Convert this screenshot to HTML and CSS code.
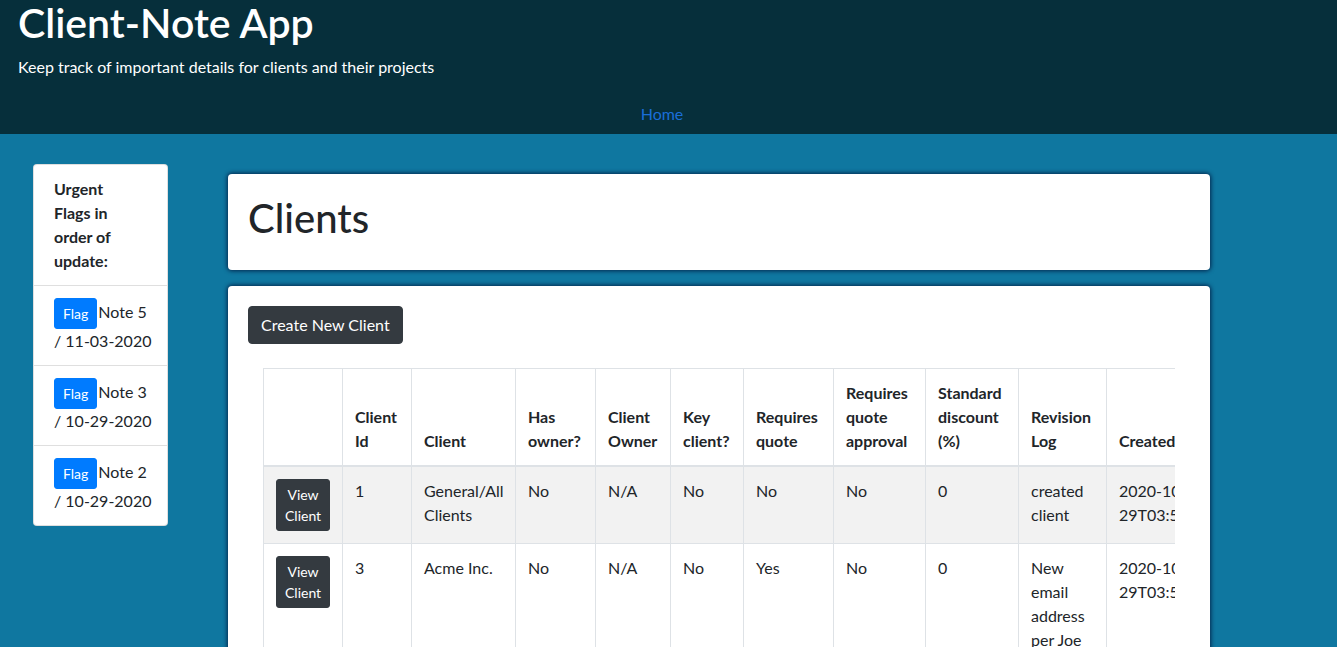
FILE: index.html
```html
<!DOCTYPE html>
<html lang="en">
<head>
<meta charset="utf-8">
<title>Client-Note App</title>
<link rel="stylesheet" href="styles.css">
</head>
<body>
<header class="site-header">
  <h1 class="brand">Client-Note App</h1>
  <p class="tagline">Keep track of important details for clients and their projects</p>
  <nav class="site-nav"><a class="nav-link" href="#">Home</a></nav>
</header>
<div class="page">
  <aside class="flags-card">
    <div class="flags-header">Urgent Flags in order of update:</div>
    <ul class="flag-list">
      <li class="flag-item"><span class="btn-flag">Flag</span>Note 5 <span class="flag-date">/ 11-03-2020</span></li>
      <li class="flag-item"><span class="btn-flag">Flag</span>Note 3 <span class="flag-date">/ 10-29-2020</span></li>
      <li class="flag-item"><span class="btn-flag">Flag</span>Note 2 <span class="flag-date">/ 10-29-2020</span></li>
    </ul>
  </aside>
  <main class="main">
    <section class="card title-card">
      <h2 class="page-title">Clients</h2>
    </section>
    <section class="card list-card">
      <a class="btn-create" href="#">Create New Client</a>
      <div class="table-wrap">
        <table class="clients-table">
          <colgroup>
            <col class="c-act"><col class="c-id"><col class="c-client"><col class="c-owner"><col class="c-cowner"><col class="c-key"><col class="c-quote"><col class="c-qapp"><col class="c-disc"><col class="c-log"><col class="c-date"><col class="c-date"><col class="c-act2">
          </colgroup>
          <thead>
            <tr>
              <th></th>
              <th>Client Id</th>
              <th>Client</th>
              <th>Has owner?</th>
              <th>Client Owner</th>
              <th>Key client?</th>
              <th>Requires quote</th>
              <th>Requires quote approval</th>
              <th>Standard discount (%)</th>
              <th>Revision Log</th>
              <th>Created</th>
              <th>Updated</th>
              <th></th>
            </tr>
          </thead>
          <tbody>
            <tr class="striped">
              <td><a class="btn-view" href="#">View Client</a></td>
              <td>1</td>
              <td>General/All Clients</td>
              <td>No</td>
              <td>N/A</td>
              <td>No</td>
              <td>No</td>
              <td>No</td>
              <td>0</td>
              <td>created client</td>
              <td>2020-10-<br>29T03:54:21.933Z</td>
              <td>2020-10-<br>29T03:54:21.933Z</td>
              <td></td>
            </tr>
            <tr>
              <td><a class="btn-view" href="#">View Client</a></td>
              <td>3</td>
              <td>Acme Inc.</td>
              <td>No</td>
              <td>N/A</td>
              <td>No</td>
              <td>Yes</td>
              <td>No</td>
              <td>0</td>
              <td>New email address per Joe Smith</td>
              <td>2020-10-<br>29T03:55:10.112Z</td>
              <td>2020-11-<br>03T17:22:45.018Z</td>
              <td></td>
            </tr>
          </tbody>
        </table>
      </div>
    </section>
  </main>
</div>
</body>
</html>
```

FILE: styles.css
```css
* { box-sizing: border-box; }
html, body { margin: 0; padding: 0; }
body {
  font-family: Lato, "Open Sans", "Liberation Sans", sans-serif;
  font-size: 16px;
  line-height: 24px;
  color: #212529;
  background: #0f77a0;
  overflow: hidden;
}
.site-header {
  background: #062f3b;
  color: #ffffff;
  padding: 0 0 0 18px;
}
.brand {
  margin: 0;
  font-size: 41px;
  line-height: 46px;
  font-weight: 600;
}
.tagline {
  margin: 9px 0 15px;
  font-size: 16px;
  line-height: 24px;
}
.site-nav {
  display: flex;
  justify-content: center;
  padding: 8px 13px 8px 0;
  margin-left: -18px;
}
.nav-link {
  color: #1a6ed8;
  text-decoration: none;
  line-height: 24px;
}
.page {
  display: flex;
  align-items: flex-start;
  padding-top: 30px;
}
.flags-card {
  margin-left: 33px;
  width: 135px;
  flex: none;
  background: #fff;
  border: 1px solid rgba(0,0,0,.125);
  border-radius: 4px;
}
.flags-header {
  padding: 12px 26px 12px 20px;
  font-weight: 700;
  border-bottom: 1px solid rgba(0,0,0,.125);
}
.flag-list { list-style: none; margin: 0; padding: 0; }
.flag-item {
  padding: 12px 20px;
  border-top: 1px solid rgba(0,0,0,.125);
}
.flag-item:first-child { border-top: 0; }
.flag-date { white-space: nowrap; }
.btn-flag {
  display: inline-block;
  vertical-align: middle;
  margin-right: 1px;
  background: #007bff;
  color: #fff;
  font-size: 14px;
  line-height: 21px;
  padding: 4px 8px;
  border: 1px solid #007bff;
  border-radius: 3px;
}
.main {
  margin-left: 60px;
  width: 982px;
  flex: none;
  padding-top: 10px;
  display: flex;
  flex-direction: column;
  gap: 16px;
}
.card {
  background: #fff;
  border-radius: 4px;
  box-shadow: 0 0 4px 1px #04264d;
  padding: 20px;
}
.page-title {
  margin: 0 0 8px;
  font-size: 40px;
  line-height: 48px;
  font-weight: 500;
}
.list-card { min-height: 420px; }
.btn-create {
  display: inline-block;
  background: #343a40;
  color: #fff;
  text-decoration: none;
  padding: 6px 12px;
  line-height: 24px;
  border: 1px solid #343a40;
  border-radius: 4px;
}
.table-wrap {
  margin: 24px 15px 0;
  overflow: hidden;
}
.clients-table {
  border-collapse: collapse;
  table-layout: fixed;
  width: 1340px;
  border: 1px solid #dee2e6;
}
.c-act { width: 79px; }
.c-id { width: 69px; }
.c-client { width: 104px; }
.c-owner { width: 80px; }
.c-cowner { width: 75px; }
.c-key { width: 73px; }
.c-quote { width: 90px; }
.c-qapp { width: 92px; }
.c-disc { width: 93px; }
.c-log { width: 88px; }
.c-date { width: 180px; }
.c-act2 { width: 137px; }
.clients-table th,
.clients-table td {
  border: 1px solid #dee2e6;
  padding: 12px;
  text-align: left;
  vertical-align: top;
}
.clients-table th {
  vertical-align: bottom;
  font-weight: 700;
  border-bottom: 2px solid #dee2e6;
}
.striped td { background: #f2f2f2; }
.btn-view {
  display: inline-block;
  background: #343a40;
  color: #fff;
  text-decoration: none;
  text-align: center;
  font-size: 14px;
  line-height: 21px;
  padding: 4px 8px;
  border: 1px solid #343a40;
  border-radius: 3px;
  width: 54px;
}
```
